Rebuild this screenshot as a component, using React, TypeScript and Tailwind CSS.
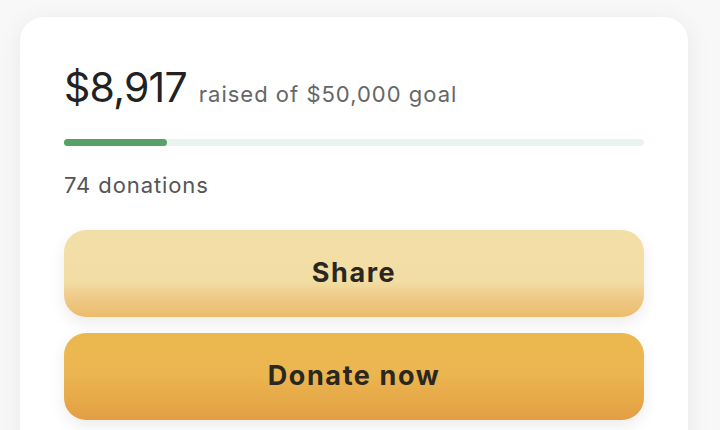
export default function App() {
  const raised = 8917;
  const goal = 50000;
  const pct = (raised / goal) * 100;

  return (
    <div
      className="w-[720px] h-[430px] overflow-hidden bg-[#f8f8f8] pt-[17px] pl-[20px]"
      style={{ fontFamily: 'Inter, "Noto Sans", sans-serif' }}
    >
      <div className="w-[668px] h-[460px] rounded-[24px] bg-white shadow-[0_4px_24px_rgba(0,0,0,0.07)] px-[44px] pt-[50px]">
        {/* Amount raised */}
        <div className="flex items-baseline gap-[12px]">
          <span className="text-[41px] leading-none text-[#222] tracking-[-0.8px]">$8,917</span>
          <span className="text-[22px] leading-none text-[#666] tracking-[1px]">raised of $50,000 goal</span>
        </div>

        {/* Progress */}
        <div className="mt-[31px] h-[7px] w-[580px] rounded-full bg-[#e9f4ef]">
          <div className="h-full rounded-full bg-[#55a166]" style={{ width: `${pct}%` }} />
        </div>

        <div className="mt-[28px] text-[22px] leading-none text-[#555] tracking-[0.9px]">74 donations</div>

        {/* Buttons */}
        <div className="mt-[34px] flex flex-col gap-[16px] w-[580px]">
          <button className="h-[87px] rounded-[22px] bg-[linear-gradient(to_bottom,#f2dfa8_0%,#f2dea4_58%,#eec885_80%,#ecbc6c_100%)] shadow-[0_6px_16px_rgba(0,0,0,0.08)] text-[27px] font-bold text-[#2a2620] tracking-[1.6px]">
            Share
          </button>
          <button className="h-[87px] rounded-[22px] bg-[linear-gradient(to_bottom,#ebb84f_0%,#ebb650_45%,#e6a848_80%,#e39e45_100%)] shadow-[0_6px_16px_rgba(0,0,0,0.08)] text-[27px] font-bold text-[#2a2620] tracking-[1.6px]">
            Donate now
          </button>
        </div>
      </div>
    </div>
  );
}
